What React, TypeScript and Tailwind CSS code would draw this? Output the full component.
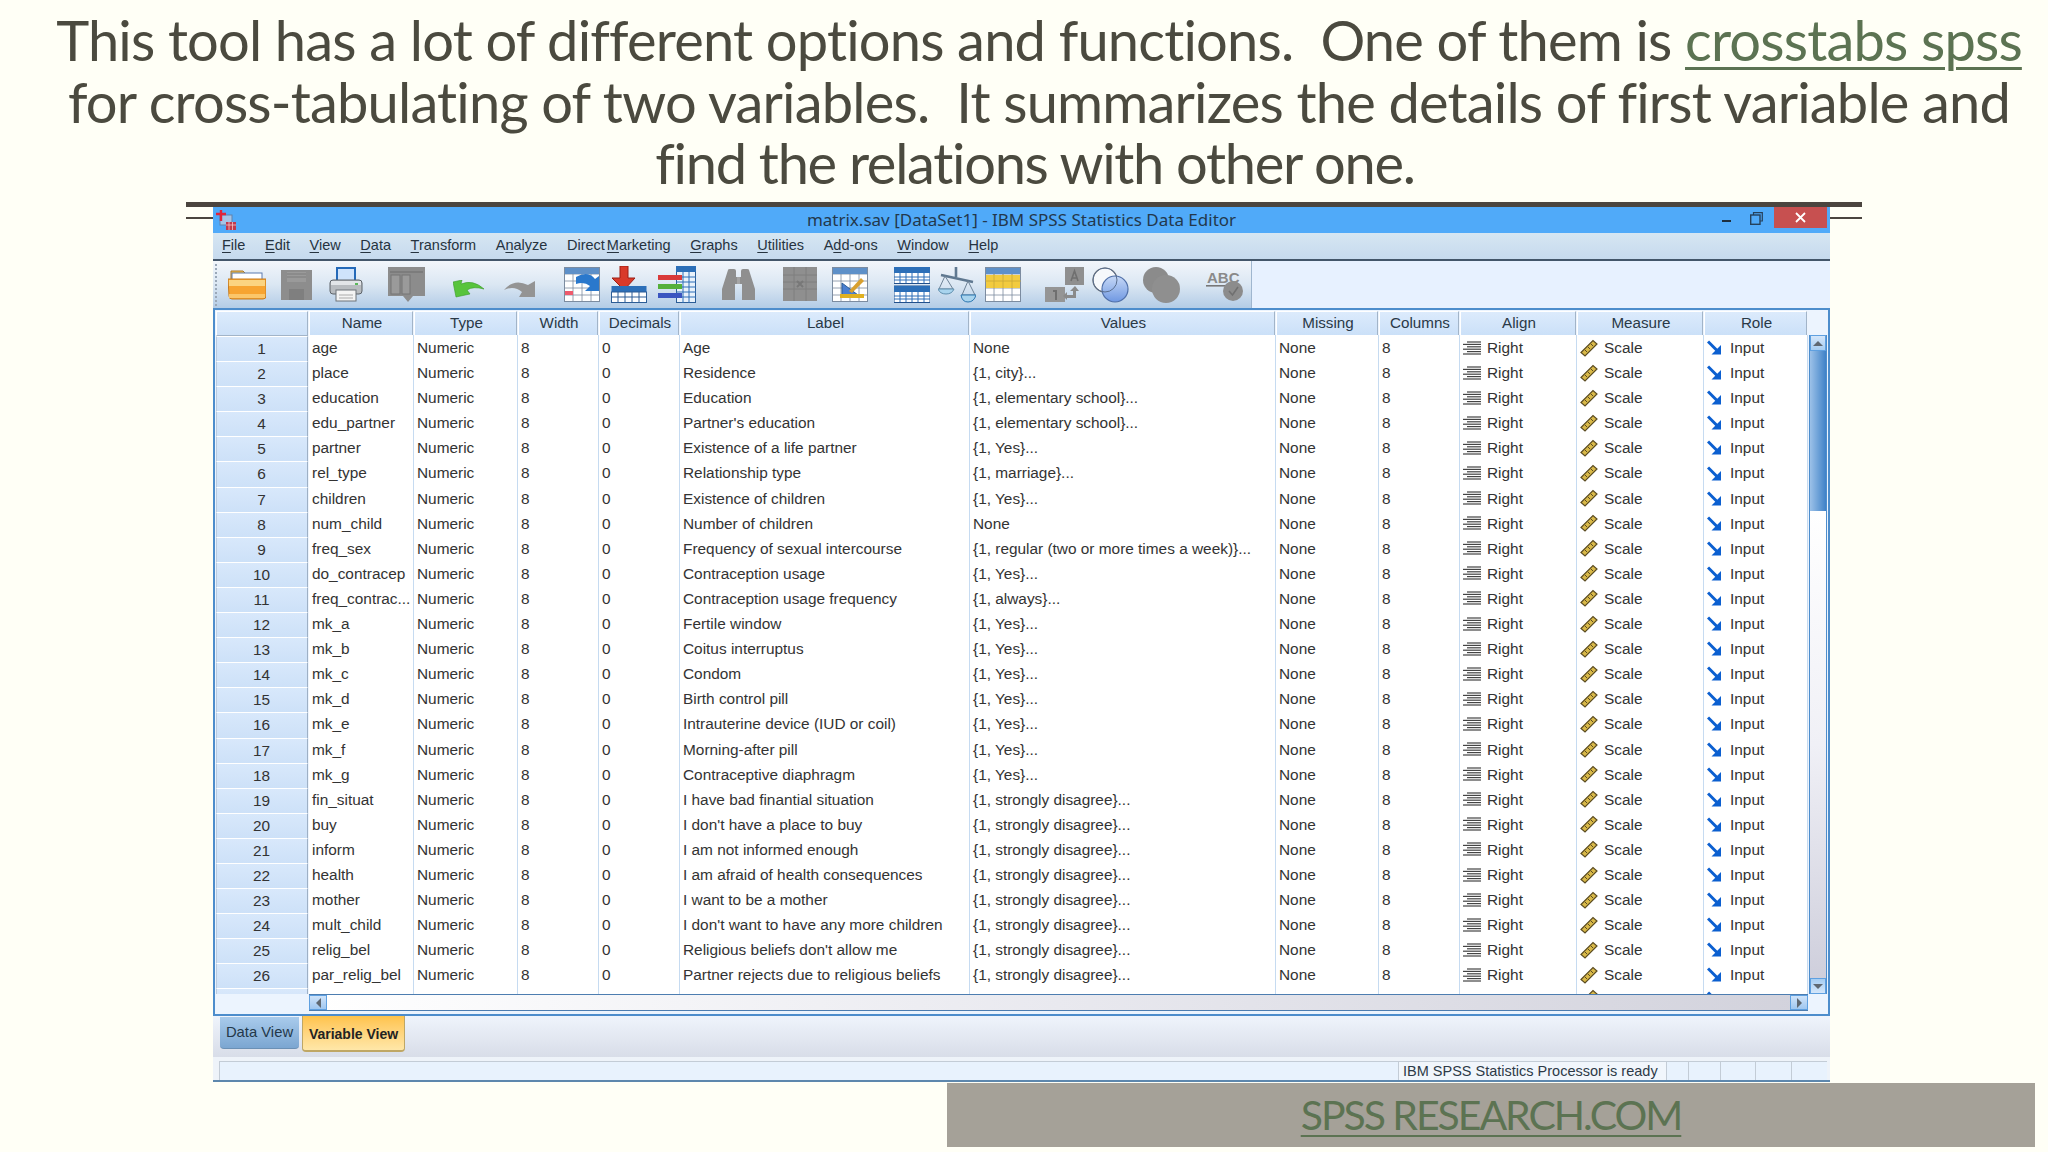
import React from "react";

const COLS = "grid grid-cols-[94px_105px_104px_81px_81px_290px_306px_103px_81px_117px_127px_104px]";
const HEAD = ["Name", "Type", "Width", "Decimals", "Label", "Values", "Missing", "Columns", "Align", "Measure", "Role"];
const S = "{1, strongly disagree}...";
const Y = "{1, Yes}...";
const ROWS: [string, string, string][] = [
  ["age", "Age", "None"],
  ["place", "Residence", "{1, city}..."],
  ["education", "Education", "{1, elementary school}..."],
  ["edu_partner", "Partner's education", "{1, elementary school}..."],
  ["partner", "Existence of a life partner", Y],
  ["rel_type", "Relationship type", "{1, marriage}..."],
  ["children", "Existence of children", Y],
  ["num_child", "Number of children", "None"],
  ["freq_sex", "Frequency of sexual intercourse", "{1, regular (two or more times a week)}..."],
  ["do_contracep", "Contraception usage", Y],
  ["freq_contrac...", "Contraception usage frequency", "{1, always}..."],
  ["mk_a", "Fertile window", Y],
  ["mk_b", "Coitus interruptus", Y],
  ["mk_c", "Condom", Y],
  ["mk_d", "Birth control pill", Y],
  ["mk_e", "Intrauterine device (IUD or coil)", Y],
  ["mk_f", "Morning-after pill", Y],
  ["mk_g", "Contraceptive diaphragm", Y],
  ["fin_situat", "I have bad finantial situation", S],
  ["buy", "I don't have a place to buy", S],
  ["inform", "I am not informed enough", S],
  ["health", "I am afraid of health consequences", S],
  ["mother", "I want to be a mother", S],
  ["mult_child", "I don't want to have any more children", S],
  ["relig_bel", "Religious beliefs don't allow me", S],
  ["par_relig_bel", "Partner rejects due to religious beliefs", S],
];

const AlignIcon = () => (
  <svg width="18" height="14" viewBox="0 0 18 14" className="shrink-0">
    {[1, 3.4, 5.8, 8.2, 10.6, 13].map((y, i) => (
      <rect key={y} x={i % 2 ? 0 : 4} y={y - 0.6} width={i % 2 ? 18 : 14} height="1.2" fill="#444" />
    ))}
  </svg>
);
const RulerIcon = () => (
  <svg width="18" height="18" viewBox="0 0 18 18" className="shrink-0">
    <polygon points="1,13.5 13,1.5 17,5 5,17" fill="#d8b848" stroke="#5b4c22" strokeWidth="1.2" />
    <path d="M5 11l2 2M8 8l2 2M11 5l2 2" stroke="#5b4c22" strokeWidth="1" />
  </svg>
);
const ArrowIcon = () => (
  <svg width="15" height="15" viewBox="0 0 15 15" className="shrink-0">
    <path d="M1 1.5L10 10.5" stroke="#0b5fd0" strokeWidth="3" />
    <polygon points="14,5 14,14.5 4.5,14.5" fill="#0b5fd0" />
  </svg>
);

const cell = "border-r border-b border-[#c6dbf1] bg-white flex items-center pl-[3px] pb-[2px] overflow-hidden whitespace-nowrap";

function Row({ n, r }: { n: number | string; r: [string, string, string] }) {
  const show = r[0] !== "";
  return (
    <div className={`${COLS} h-[25.1px]`}>
      <div className="flex items-center justify-center pr-[1px] pb-[1px] ml-px mr-px my-px bg-gradient-to-b from-[#d8e8fb] to-[#cde1f8] border border-[#9eb0c5] border-t-white border-l-[#b9cbe0] text-[#333]">{n}</div>
      <div className={cell}>{r[0]}</div>
      <div className={cell}>{show ? "Numeric" : ""}</div>
      <div className={cell}>{show ? "8" : ""}</div>
      <div className={cell}>{show ? "0" : ""}</div>
      <div className={cell}>{r[1]}</div>
      <div className={cell}>{r[2]}</div>
      <div className={cell}>{show ? "None" : ""}</div>
      <div className={cell}>{show ? "8" : ""}</div>
      <div className={`${cell} gap-[6px]`}>
        {show && <AlignIcon />}
        {show ? "Right" : ""}
      </div>
      <div className={`${cell} gap-[6px]`}>
        <RulerIcon />
        {show ? "Scale" : ""}
      </div>
      <div className={`${cell} gap-[8px]`}>
        <ArrowIcon />
        {show ? "Input" : ""}
      </div>
    </div>
  );
}

const TableIcon = ({ head = "#e8eef6", fill = "#fff", line = "#7c8ca0" }: { head?: string; fill?: string; line?: string }) => (
  <g>
    <rect x="0.5" y="0.5" width="35" height="34" fill={fill} stroke={line} />
    <rect x="1" y="1" width="34" height="6" fill={head} />
    {[9, 18, 27].map((x) => <path key={x} d={`M${x} 0V35`} stroke={line} strokeWidth="0.8" />)}
    {[7, 14, 21, 28].map((y) => <path key={y} d={`M0 ${y}H36`} stroke={line} strokeWidth="0.8" />)}
  </g>
);

function Toolbar() {
  return (
    <div className="flex items-center h-full">
      <div className="w-[3px] h-[42px] ml-[2px] border-l-2 border-dotted border-[#9aa8b8]" />
      {/* open */}
      <svg width="38" height="33" viewBox="0 0 38 33" className="ml-[10px]">
        <path d="M3 3h12l3 3h15v8H3z" fill="#f5c24c" stroke="#a8772a" />
        <rect x="4" y="5" width="30" height="9" fill="#fff" stroke="#5b7bb0" />
        <path d="M0 11h38v17q0 3-3 3H4q-3 0-3-3z" fill="#f7a431" stroke="#c67c20" />
        <rect x="1" y="12" width="36" height="6" fill="#fbd481" />
        <rect x="1" y="26" width="36" height="4" fill="#fbc66a" />
      </svg>
      {/* save */}
      <svg width="31" height="30" viewBox="0 0 31 30" className="ml-[15px]">
        <rect width="31" height="30" fill="#8d8d8d" />
        <rect x="6" y="2" width="19" height="10" fill="#9a9a9a" />
        <path d="M6 4H25M6 7H25" stroke="#7d7d7d" />
        <rect x="8" y="19" width="15" height="11" fill="#7f7f7f" />
      </svg>
      {/* print */}
      <svg width="34" height="36" viewBox="0 0 34 36" className="ml-[17px]">
        <path d="M8 1h18v13H8z" fill="#cfe3fb" stroke="#2469b8" strokeWidth="2" />
        <rect x="1" y="13" width="32" height="14" rx="3" fill="#b8bcc0" stroke="#5d6369" />
        <rect x="2" y="14" width="30" height="4" fill="#e2e5e8" />
        <rect x="26" y="16" width="3" height="2" fill="#5cb85c" />
        <rect x="7" y="23" width="20" height="11" fill="#f4f4f4" stroke="#6d7378" />
        <path d="M10 28H24M10 31H24" stroke="#aaa" />
      </svg>
      {/* var gray */}
      <svg width="37" height="36" viewBox="0 0 37 36" className="ml-[25px]">
        <path d="M0 0H37V29H25L20 35 15 29H0z" fill="#8c8c8c" />
        <path d="M2 5H35" stroke="#6c6c6c" />
        <rect x="3" y="8" width="9" height="19" fill="#9a9a9a" stroke="#757575" />
        <rect x="14" y="8" width="8" height="19" fill="#9a9a9a" stroke="#757575" />
      </svg>
      {/* undo */}
      <svg width="31" height="18" viewBox="0 0 31 18" className="ml-[28px] mt-[8px]">
        <path d="M0 2L9 0 8 4Q20-1 31 9 20 6 14 10L17 14 3 17z" fill="#58c43c" stroke="#3b9a28" strokeWidth="0.6" />
      </svg>
      {/* redo */}
      <svg width="31" height="18" viewBox="0 0 31 18" className="ml-[20px] mt-[8px]">
        <path d="M31 1V17H15L18 12Q10 5 0 10 10-2 24 5z" fill="#949494" />
      </svg>
      {/* go to case */}
      <svg width="36" height="36" viewBox="0 0 36 36" className="ml-[29px]">
        <TableIcon />
        <rect x="1" y="1" width="34" height="6" fill="#5e90c8" />
        <path d="M12 10Q24 3 31 12L35 9V24H21L26 19Q20 14 12 17z" fill="#2a78cc" />
        <rect x="1" y="24" width="8" height="4" fill="#ee5a6c" />
      </svg>
      {/* insert case */}
      <svg width="36" height="37" viewBox="0 0 36 37" className="ml-[11px]">
        <path d="M9 0H17V12H24L13 24 1 12H9z" fill="#d93a2a" stroke="#9d1f14" />
        <rect x="0.5" y="20" width="35" height="6" fill="#2c6fb8" />
        <rect x="0.5" y="26" width="35" height="10.5" fill="#fff" stroke="#2c5d96" />
        {[7, 14, 21, 28].map((x) => <path key={x} d={`M${x} 26V36`} stroke="#2c5d96" />)}
        <path d="M0 31H36" stroke="#2c5d96" />
      </svg>
      {/* insert variable */}
      <svg width="38" height="37" viewBox="0 0 38 37" className="ml-[11px]">
        <rect x="18.5" y="0.5" width="19" height="36" fill="#e9f2fb" stroke="#2c5d96" />
        <rect x="18" y="0" width="20" height="6" fill="#2c6fb8" />
        {[11, 16, 21, 26, 31].map((y) => <path key={y} d={`M18 ${y}H38`} stroke="#2c6fb8" />)}
        {[25, 31].map((x) => <path key={x} d={`M${x} 0V37`} stroke="#2c6fb8" />)}
        <rect x="0" y="9" width="24" height="5" fill="#d93a3a" />
        <rect x="0" y="18" width="24" height="5" fill="#54b03a" />
        <rect x="0" y="27" width="24" height="5" fill="#3a55c0" />
      </svg>
      {/* binoculars */}
      <svg width="33" height="31" viewBox="0 0 33 31" className="ml-[26px]">
        <path d="M6 1Q6 0 8 0H12Q14 0 14 2V8H19V2Q19 0 21 0H25Q27 0 27 1L33 20V31H20V15H13V31H0V20z" fill="#8f8f8f" />
        <path d="M16.5 8V15" stroke="#a5a5a5" strokeWidth="3" />
      </svg>
      {/* gray table */}
      <svg width="34" height="35" viewBox="0 0 34 35" className="ml-[28px]">
        <rect width="34" height="34" fill="#8f8f8f" />
        <path d="M0 8H34M0 15H34M0 22H34M11 0V34M23 0V34" stroke="#7e7e7e" />
        <path d="M14 14L20 20M20 14L14 20" stroke="#787878" strokeWidth="2" />
      </svg>
      {/* weight/select */}
      <svg width="36" height="36" viewBox="0 0 36 36" className="ml-[15px]">
        <TableIcon />
        <rect x="1" y="1" width="34" height="6" fill="#5e90c8" />
        <path d="M10 16V28H26z" fill="#4a7fd0" stroke="#2c5d96" />
        <path d="M17 24L29 11l3 3-12 12z" fill="#d8a030" />
        <rect x="8" y="27" width="24" height="4" fill="#e0b020" />
      </svg>
      {/* split file */}
      <svg width="36" height="36" viewBox="0 0 36 36" className="ml-[26px]">
        {[0, 19].map((y) => (
          <g key={y}>
            <rect y={y} width="36" height="16.5" fill="#fff" stroke="#21508c" />
            <rect y={y} width="36" height="6" fill="#2c6fb8" />
            <path d={`M0 ${y + 10}H36M0 ${y + 13}H36`} stroke="#2c6fb8" />
            {[6, 12, 18, 24, 30].map((x) => <path key={x} d={`M${x} ${y + 6}V${y + 16}`} stroke="#2c6fb8" />)}
          </g>
        ))}
      </svg>
      {/* scales */}
      <svg width="38" height="36" viewBox="0 0 38 36" className="ml-[8px]">
        <path d="M18 0V10M3 8L35 15" stroke="#5f7890" strokeWidth="2.6" />
        <path d="M7 9L1 22H15zM30 14L24 28H37z" fill="none" stroke="#6d8296" />
        <path d="M0 22H16Q14 27 8 27T0 22z" fill="#a9d4ee" stroke="#5f8fae" />
        <path d="M23 28H38Q36 35 30 35T23 28z" fill="#a9d4ee" stroke="#2c76b0" />
      </svg>
      {/* value labels */}
      <svg width="36" height="36" viewBox="0 0 36 36" className="ml-[9px]">
        <TableIcon />
        <rect x="1" y="1" width="34" height="6" fill="#5e90c8" />
        <rect x="1" y="8" width="34" height="13" fill="#f2cb3f" />
        <path d="M9 7V21M18 7V21M27 7V21M0 14H36" stroke="#c9a838" strokeWidth="0.8" />
      </svg>
      {/* A-1 */}
      <svg width="39" height="36" viewBox="0 0 39 36" className="ml-[24px]">
        <rect x="20" width="19" height="18" fill="#8f8f8f" />
        <rect y="20" width="20" height="15" fill="#959595" />
        <path d="M26 14L29.5 4 33 14M27 11H32" stroke="#6f6f6f" strokeWidth="1.6" fill="none" />
        <path d="M8 24H11V33" stroke="#6f6f6f" strokeWidth="2" fill="none" />
        <path d="M30 19L25 24H28V28H22V25L18 29 22 33V31H31V24H34z" fill="#8a8a8a" />
      </svg>
      {/* circles */}
      <svg width="37" height="36" viewBox="0 0 37 36" className="ml-[8px]">
        <defs>
          <linearGradient id="bc" x1="0" y1="0" x2="0" y2="1">
            <stop offset="0" stopColor="#c6d8f6" />
            <stop offset="1" stopColor="#6f98e2" />
          </linearGradient>
        </defs>
        <circle cx="13" cy="13" r="12" fill="#f6f8fb" stroke="#6f6f6f" strokeWidth="1.2" />
        <circle cx="23" cy="22" r="13" fill="url(#bc)" stroke="#4f6fa8" strokeWidth="1.2" />
        <circle cx="13" cy="13" r="12" fill="none" stroke="#5a6f8f" strokeWidth="1" />
      </svg>
      {/* gray circles */}
      <svg width="37" height="36" viewBox="0 0 37 36" className="ml-[14px]">
        <circle cx="13" cy="13" r="13" fill="#8b8b8b" />
        <circle cx="23" cy="22" r="14" fill="#8f8f8f" />
      </svg>
      {/* ABC */}
      <svg width="38" height="31" viewBox="0 0 38 31" className="ml-[26px] mt-[2px]">
        <rect x="0" y="15" width="30" height="1.6" fill="#777" />
        <text x="1" y="13" fontSize="15" fontWeight="700" fontFamily="Liberation Sans" fill="#8a8a8a">ABC</text>
        <rect x="17" y="11" width="20" height="20" rx="10" fill="#8c8c8c" />
        <path d="M23 21L26.5 25 32 17" stroke="#707070" strokeWidth="1.6" fill="none" />
      </svg>
    </div>
  );
}

function Menu({ pre = "", u, post, cls = "" }: { pre?: string; u: string; post: string; cls?: string }) {
  return (
    <span className={cls}>
      {pre}
      <span className="underline underline-offset-2">{u}</span>
      {post}
    </span>
  );
}

export default function App() {
  return (
    <div className="w-[2048px] h-[1152px] overflow-hidden bg-[#fffff6] flex flex-col font-['Liberation_Sans',sans-serif]">
      <h1 className="pl-[30px] pt-[9px] h-[202px] shrink-0 text-center text-[#4b4a3f] text-[56px] leading-[61.5px] font-normal font-['Lato',sans-serif] tracking-[-0.0145em] whitespace-nowrap">
        <span className="block">
          This tool has a lot of different options and functions.&nbsp; One of them is{" "}
          <span className="text-[#5c7352] underline decoration-[3px] underline-offset-[6px]">crosstabs spss</span>
        </span>
        <span className="block">for cross-tabulating of two variables.&nbsp; It summarizes the details of first variable and</span>
        <span className="block pr-[8px] tracking-[-0.023em]">find the relations with other one.</span>
      </h1>

      <div className="relative ml-[186px] w-[1676px] shrink-0">
        <div className="h-[5px] bg-[#4b453f]" />
        <div className="absolute left-0 right-0 top-[15px] h-[2px] bg-[#4b453f]" />
        <div className="relative ml-[27px] w-[1617px] h-[875px] flex flex-col text-[15.4px] text-[#333]">
          {/* title */}
          <div className="h-[26px] shrink-0 bg-[#50aaf9] flex items-center relative">
            <svg width="20" height="20" viewBox="0 0 20 20" className="absolute left-[3px] top-[3px]">
              <rect x="4" y="5" width="12" height="10" fill="#a6c4e6" stroke="#5f82ad" />
              <path d="M5 0V11M0 4H10" stroke="#e0243a" strokeWidth="2.4" />
              <rect x="10" y="12" width="10" height="8" fill="#c0394c" />
              <path d="M10 15H20M13 12V20M16.5 12V20" stroke="#f3c3c8" strokeWidth="0.8" />
            </svg>
            <div className="w-full text-center text-[17px] text-[#23384c] font-['Noto_Sans',sans-serif]">
              matrix.sav [DataSet1] - IBM SPSS Statistics Data Editor
            </div>
            <div className="absolute right-[99px] top-[13px] w-[9px] h-[2px] bg-[#1e2f3f]" />
            <svg width="13" height="13" viewBox="0 0 13 13" className="absolute right-[67px] top-[5px]">
              <path d="M3.5 3V.7H12.3V9H10" fill="none" stroke="#25415c" strokeWidth="1.2" />
              <rect x="0.7" y="3" width="9.3" height="9.3" fill="none" stroke="#25415c" strokeWidth="1.4" />
            </svg>
            <div className="absolute right-[3px] top-0 w-[53px] h-[21px] bg-[#c75050] flex items-center justify-center">
              <svg width="11" height="11" viewBox="0 0 11 11">
                <path d="M1 1L10 10M10 1L1 10" stroke="#fff" strokeWidth="1.8" />
              </svg>
            </div>
          </div>
          {/* menu */}
          <div className="h-[28px] shrink-0 bg-gradient-to-b from-[#d6e6f2] to-[#c6daee] border-b-2 border-[#43566a] flex items-center gap-[19.6px] pl-[9px] text-[14.5px] text-[#26333f]">
            <Menu u="F" post="ile" />
            <Menu u="E" post="dit" />
            <Menu u="V" post="iew" />
            <Menu u="D" post="ata" />
            <Menu u="T" post="ransform" />
            <Menu pre="A" u="n" post="alyze" />
            <Menu pre="Direct " u="M" post="arketing" cls="[word-spacing:-2px]" />
            <Menu u="G" post="raphs" />
            <Menu u="U" post="tilities" />
            <Menu pre="A" u="d" post="d-ons" />
            <Menu u="W" post="indow" />
            <Menu u="H" post="elp" />
          </div>
          {/* toolbar */}
          <div className="h-[47px] shrink-0 bg-[#e7f1ff] flex">
            <div className="w-[1039px] h-full bg-gradient-to-b from-[#f2f6fb] via-[#dbe7f3] to-[#b3cce6] border-r border-[#9fb6cf]">
              <Toolbar />
            </div>
          </div>
          {/* grid */}
          <div className="h-[708px] shrink-0 border-2 border-[#4d8dcc] flex flex-col bg-[#ecf4fe]">
            <div className="flex h-[684px] shrink-0">
              <div className="w-[1593px] shrink-0 overflow-hidden">
                <div className={`${COLS} h-[25px] text-[15.2px] text-[#2a3947]`}>
                  <div className="mt-px ml-px mr-px mb-px bg-gradient-to-b from-[#dcebfc] to-[#cde1f8] border border-[#a2b4c8] border-t-white border-l-white" />
                  {HEAD.map((h) => (
                    <div key={h} className="mt-px mr-px mb-px pl-[2px] bg-gradient-to-b from-[#dcebfc] to-[#cbe0f8] border border-[#a2b4c8] border-t-white border-l-white flex items-center justify-center">
                      {h}
                    </div>
                  ))}
                </div>
                {ROWS.map((r, i) => (
                  <Row key={r[0]} n={i + 1} r={r} />
                ))}
                <Row n="" r={["", "", ""]} />
              </div>
              {/* vertical scrollbar */}
              <div className="w-[20px] shrink-0 pt-[25px] pl-[1px] flex flex-col">
                <div className="w-[18px] h-[659px] flex flex-col border-x border-[#4d8dcc]">
                  <div className="h-[16px] shrink-0 bg-gradient-to-b from-[#d4e6fa] to-[#a6cdf2] border border-[#5fa0e0] flex items-center justify-center">
                    <div className="w-0 h-0 border-x-[5px] border-x-transparent border-b-[5px] border-b-[#5f6872]" />
                  </div>
                  <div className="h-[160px] shrink-0 bg-gradient-to-r from-[#9cc1e8] via-[#6ea2d8] to-[#3f82c8]" />
                  <div className="grow bg-gradient-to-b from-white via-[#f0f0f6] to-[#cfcfdc]" />
                  <div className="h-[16px] shrink-0 bg-gradient-to-b from-[#a6cdf2] to-[#d4e6fa] border border-[#5fa0e0] flex items-center justify-center">
                    <div className="w-0 h-0 border-x-[5px] border-x-transparent border-t-[5px] border-t-[#5f6872]" />
                  </div>
                </div>
              </div>
            </div>
            {/* horizontal scrollbar */}
            <div className="h-[20px] shrink-0 flex pb-[3px]">
              <div className="w-[94px] shrink-0 bg-[#ecf4fe]" />
              <div className="w-[1499px] shrink-0 flex border-y border-[#4d7db0] bg-gradient-to-r from-white via-[#e9e9ef] to-[#d2d2dc]">
                <div className="w-[18px] shrink-0 bg-gradient-to-b from-[#cfe3f9] to-[#9fc7f0] border border-[#5fa0e0] flex items-center justify-center">
                  <div className="w-0 h-0 border-y-[5px] border-y-transparent border-r-[5px] border-r-[#5f6872]" />
                </div>
                <div className="grow" />
                <div className="w-[18px] shrink-0 bg-gradient-to-b from-[#cfe3f9] to-[#9fc7f0] border border-[#5fa0e0] flex items-center justify-center">
                  <div className="w-0 h-0 border-y-[5px] border-y-transparent border-l-[5px] border-l-[#5f6872]" />
                </div>
              </div>
            </div>
          </div>
          {/* tabs */}
          <div className="h-[41px] shrink-0 bg-gradient-to-b from-[#eff4fc] to-[#d8dde8] flex items-start pl-[7px]">
            <div className="mt-[1px] w-[79px] h-[32px] rounded-b-[4px] bg-gradient-to-b from-[#a9cbec] to-[#7ba6d1] border-b border-[#6b90b5] flex items-center justify-center text-[14.8px] text-[#24384a]">
              Data View
            </div>
            <div className="ml-[3px] w-[103px] h-[36px] pt-[2px] rounded-b-[4px] bg-gradient-to-b from-[#ffc34a] to-[#ffe7a8] border border-[#bfa765] border-t-0 border-b-2 flex items-center justify-center font-bold text-[14px] text-[#222]">
              Variable View
            </div>
          </div>
          {/* status */}
          <div className="h-[25px] shrink-0 bg-[#eef3f9] border-b-2 border-[#5d87ad] pt-[4px] pl-[6px] flex text-[14.5px] text-[#2d3a47]">
            <div className="w-[1179px] border-t border-l border-[#c3ccd6] bg-[#e8f2fd]" />
            <div className="w-[268px] border-t border-l border-[#c3ccd6] bg-[#f1f6fc] pl-[4px] pr-[1px] leading-[18px] whitespace-nowrap">
              IBM SPSS Statistics Processor is ready
            </div>
            <div className="w-[22px] border-t border-l border-[#c3ccd6] bg-[#e8f2fd]" />
            <div className="w-[32px] border-t border-l border-[#c3ccd6] bg-[#e8f2fd]" />
            <div className="w-[35px] border-t border-l border-[#c3ccd6] bg-[#e8f2fd]" />
            <div className="w-[36px] border-t border-l border-[#c3ccd6] bg-[#e8f2fd]" />
            <div className="w-[36px] border-t border-l border-[#c3ccd6] bg-[#e8f2fd]" />
          </div>
        </div>
      </div>

      <div className="mt-[1px] ml-[947px] w-[1088px] h-[64px] shrink-0 bg-[#a5a198] flex items-center justify-center">
        <span className="text-[#5c7352] text-[41px] leading-[50px] underline decoration-[2px] underline-offset-[5px] font-['Lato',sans-serif] tracking-[-0.05em]">
          SPSS RESEARCH.COM
        </span>
      </div>
    </div>
  );
}
